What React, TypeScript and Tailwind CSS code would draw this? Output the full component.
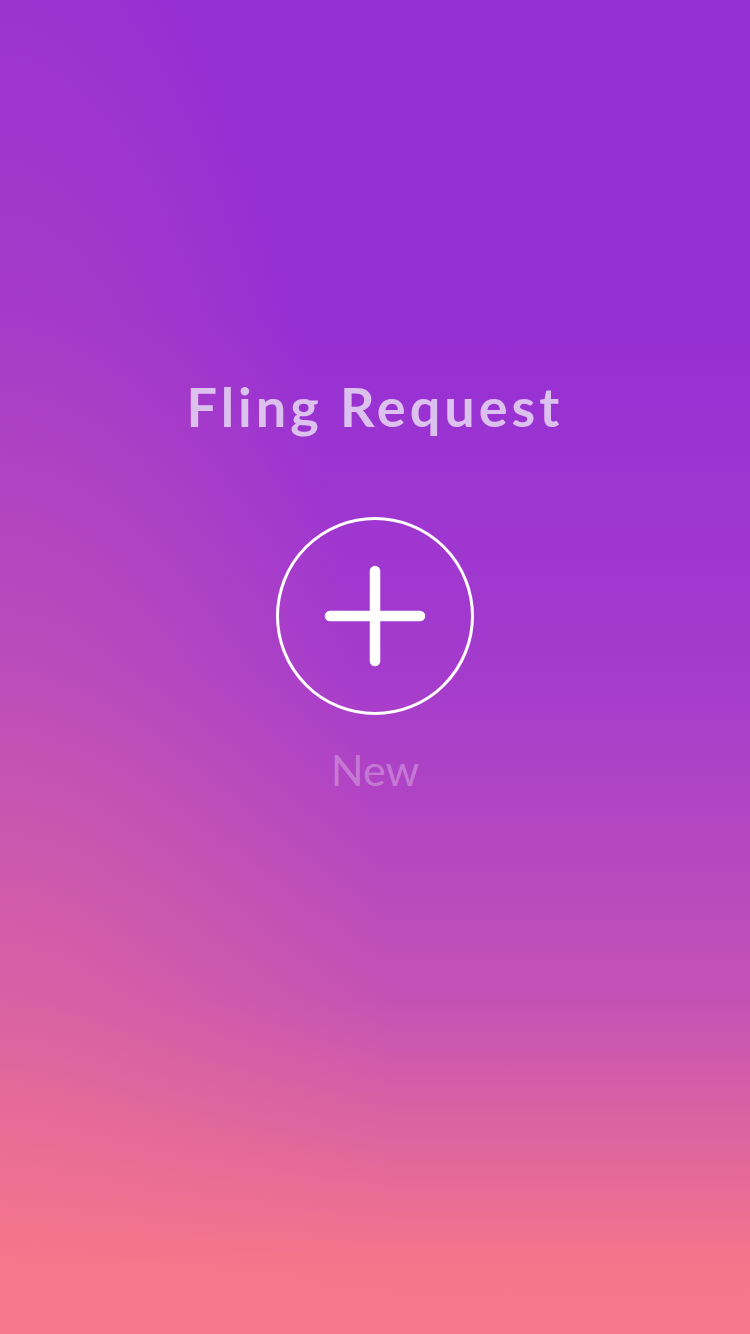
import React from "react";

export default function App() {
  return (
    <div className="w-[750px] h-[1334px] flex flex-col items-center bg-[radial-gradient(ellipse_400px_1500px_at_0%_100%,rgba(247,120,138,0.5),rgba(247,120,138,0)),linear-gradient(to_bottom,#962fd4_0%,#962fd4_24%,#a43bcd_50%,#c452b5_75%,#f5768a_95%,#f6778a_100%)] font-['Lato','Open_Sans',sans-serif]">
      {/* Title */}
      <h1 className="mt-[372px] text-[54px] leading-[70px] font-bold tracking-[4px] text-[#dcc0ee]">
        Fling Request
      </h1>

      {/* New request button */}
      <button className="mt-[75px] w-[198px] h-[198px] rounded-full border-[3px] border-white flex items-center justify-center">
        <svg width="104" height="104" viewBox="0 0 104 104" fill="none">
          <path d="M52 7v90M7 52h90" stroke="#ffffff" strokeWidth="10.5" strokeLinecap="round" />
        </svg>
      </button>

      <span className="mt-[30px] text-[43px] leading-[50px] font-normal text-white/30">New</span>
    </div>
  );
}
